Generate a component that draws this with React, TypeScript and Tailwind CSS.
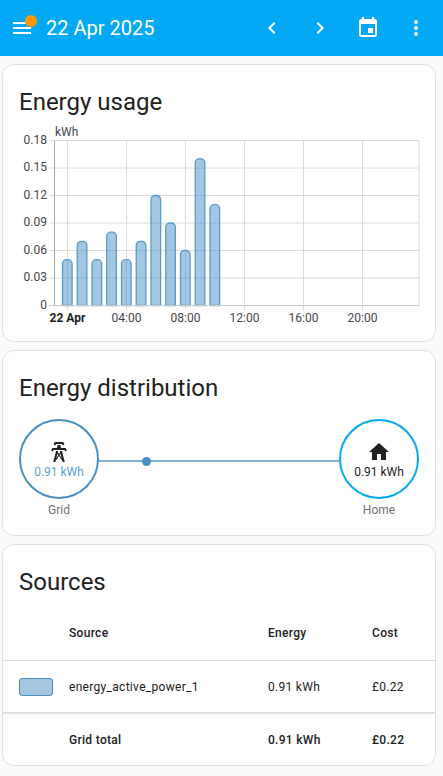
const font = { fontFamily: "Roboto, sans-serif" };

const mdi = {
  menu: "M3,6H21V8H3V6M3,11H21V13H3V11M3,16H21V18H3V16Z",
  left: "M15.41,16.58L10.83,12L15.41,7.41L14,6L8,12L14,18L15.41,16.58Z",
  right: "M8.59,16.58L13.17,12L8.59,7.41L10,6L16,12L10,18L8.59,16.58Z",
  calendar:
    "M19,19H5V8H19M16,1V3H8V1H6V3H5C3.89,3 3,3.89 3,5V19A2,2 0 0,0 5,21H19A2,2 0 0,0 21,19V5C21,3.89 20.1,3 19,3H18V1M17,12H12V17H17V12Z",
  dots: "M12,16A2,2 0 0,1 14,18A2,2 0 0,1 12,20A2,2 0 0,1 10,18A2,2 0 0,1 12,16M12,10A2,2 0 0,1 14,12A2,2 0 0,1 12,14A2,2 0 0,1 10,12A2,2 0 0,1 12,10M12,4A2,2 0 0,1 14,6A2,2 0 0,1 12,8A2,2 0 0,1 10,6A2,2 0 0,1 12,4Z",
  tower:
    "M8.28,5.45L6.5,4.55L7.76,2H16.23L17.5,4.55L15.72,5.44L15,4H9L8.28,5.45M18.62,8H14.09L13.3,5H10.7L9.91,8H5.38L4.1,10.55L5.89,11.44L6.62,10H17.38L18.1,11.45L19.89,10.56L18.62,8M17.77,22H15.7L15.46,21.1L12,15.9L8.53,21.1L8.3,22H6.23L9.12,11H11.19L10.83,12.35L12,14.1L13.16,12.35L12.81,11H14.88L17.77,22M11.4,15L10.5,13.65L9.32,18.13L11.4,15M14.68,18.12L13.5,13.64L12.6,15L14.68,18.12Z",
  home: "M10,20V14H14V20H19V12H22L12,3L2,12H5V20H10Z",
};

function Icon({ d, className }: { d: string; className?: string }) {
  return (
    <svg viewBox="0 0 24 24" className={`h-6 w-6 fill-current ${className ?? ""}`}>
      <path d={d} />
    </svg>
  );
}

function Header() {
  return (
    <div className="flex h-14 items-center bg-[#03a9f4] pr-[3px] text-white">
      <div className="relative ml-2.5 h-6 w-6">
        <Icon d={mdi.menu} />
        <span className="absolute left-[15px] top-[-1px] h-3 w-3 rounded-full bg-[#ff9800]" />
      </div>
      <div className="ml-3 flex-1 text-xl">22 Apr 2025</div>
      {[mdi.left, mdi.right, mdi.calendar, mdi.dots].map((d) => (
        <div key={d} className="flex h-12 w-12 items-center justify-center">
          <Icon d={d} />
        </div>
      ))}
    </div>
  );
}

const values = [0.05, 0.07, 0.05, 0.08, 0.05, 0.07, 0.12, 0.09, 0.06, 0.16, 0.11];
const yTicks = ["0.18", "0.15", "0.12", "0.09", "0.06", "0.03", "0"];
const xTicks = ["22 Apr", "04:00", "08:00", "12:00", "16:00", "20:00"];

function UsageChart() {
  const left = 51.5;
  const right = 416;
  const top = 20.5;
  const bottom = 185.5;
  const pxPerUnit = (bottom - top) / 0.18;
  return (
    <svg width="431" height="205" className="block" style={font}>
      {yTicks.map((t, i) => {
        const y = top + (i * (bottom - top)) / 6;
        return (
          <g key={t}>
            <line x1={left - 5} x2={right} y1={y} y2={y} stroke="#dcdcdc" />
            <text x={left - 7.5} y={y + 3} textAnchor="end" fontSize="12" fill="#44464a">
              {t}
            </text>
          </g>
        );
      })}
      <line x1={right} x2={right} y1={top} y2={bottom} stroke="#dcdcdc" />
      <line x1={left} x2={left} y1={top} y2={bottom} stroke="#a9a9a9" />
      {xTicks.map((t, i) => {
        const x = 64.5 + i * 59;
        return (
          <g key={t}>
            <line x1={x} x2={x} y1={top} y2={bottom + 5} stroke="#dcdcdc" />
            <text
              x={x}
              y={bottom + 16}
              textAnchor="middle"
              fontSize="12"
              fontWeight={i === 0 ? 700 : 400}
              fill={i === 0 ? "#212121" : "#44464a"}
            >
              {t}
            </text>
          </g>
        );
      })}
      <text x={52} y={16} fontSize="12" fill="#44464a">
        kWh
      </text>
      {values.map((v, i) => {
        const cx = 64.3 + i * 14.75;
        const h = v * pxPerUnit;
        const x0 = cx - 4.8;
        const x1 = cx + 4.8;
        const t = bottom - h;
        return (
          <path
            key={i}
            d={`M${x0} ${bottom}V${t + 4}A4 4 0 0 1 ${x0 + 4} ${t}H${x1 - 4}A4 4 0 0 1 ${x1} ${t + 4}V${bottom}Z`}
            fill="#488fc2"
            fillOpacity="0.5"
            stroke="#5a9bcc"
            strokeWidth="1.3"
          />
        );
      })}
      <line x1={left - 5} x2={right} y1={bottom} y2={bottom} stroke="#c8c8c8" />
    </svg>
  );
}

function Card({ className, children }: { className: string; children: React.ReactNode }) {
  return (
    <div className={`overflow-hidden rounded-xl border border-[#e0e0e0] bg-white ${className}`}>
      {children}
    </div>
  );
}

function Node({
  icon,
  label,
  ringClass,
  valueClass,
}: {
  icon: string;
  label: string;
  ringClass: string;
  valueClass: string;
}) {
  return (
    <div className="flex w-20 flex-col items-center">
      <div className={`flex h-20 w-20 flex-col items-center rounded-full border-2 pt-[19px] ${ringClass}`}>
        <Icon d={icon} className="shrink-0 text-[#212121]" />
        <div className={`-mt-px text-xs leading-[18px] ${valueClass}`}>0.91 kWh</div>
      </div>
      <div className="mt-px text-xs leading-5 text-[#727272]">{label}</div>
    </div>
  );
}

const rowGrid = "grid grid-cols-[66px_199px_104px_1fr] items-center text-xs tracking-[0.3px] text-[#212121]";

function App() {
  return (
    <div className="h-[776px] overflow-hidden bg-[#fafafa]" style={font}>
      <Header />
      <div className="flex flex-col gap-2 pl-[2px] pr-[7px] pt-2">
        <Card className="h-[278px]">
          <div className="px-4 pt-[21px] text-2xl leading-8 text-[#212121]">Energy usage</div>
          <div className="mt-[2px]">
            <UsageChart />
          </div>
        </Card>
        <Card className="h-[186px]">
          <div className="px-4 pt-[21px] text-2xl leading-8 text-[#212121]">Energy distribution</div>
          <div className="mt-[15px] flex px-4">
            <Node
              icon={mdi.tower}
              label="Grid"
              ringClass="border-[#488fc2]"
              valueClass="text-[#5a9fd6]"
            />
            <div className="relative mt-[41px] h-0.5 flex-1 bg-[#7eb0d6]">
              <span className="absolute left-[43px] top-[-3.5px] h-[9px] w-[9px] rounded-full bg-[#488fc2]" />
            </div>
            <Node
              icon={mdi.home}
              label="Home"
              ringClass="border-[#03a9f4]"
              valueClass="text-[#212121]"
            />
          </div>
        </Card>
        <Card className="h-[222px]">
          <div className="px-4 pt-[21px] text-2xl leading-8 text-[#212121]">Sources</div>
          <div className={`${rowGrid} mt-[12px] h-[51px] border-b border-[#e0e0e0] pb-1 font-medium`}>
            <div />
            <div>Source</div>
            <div>Energy</div>
            <div>Cost</div>
          </div>
          <div className={`${rowGrid} h-[53px] border-b-2 border-[#e0e0e0]`}>
            <div className="pl-4">
              <div className="h-[18px] w-[34px] rounded-[3px] border border-[#488fc2] bg-[#a4c7e1]" />
            </div>
            <div>energy_active_power_1</div>
            <div>0.91 kWh</div>
            <div>£0.22</div>
          </div>
          <div className={`${rowGrid} h-[52px] font-medium`}>
            <div />
            <div>Grid total</div>
            <div>0.91 kWh</div>
            <div>£0.22</div>
          </div>
        </Card>
      </div>
    </div>
  );
}

export default App;
